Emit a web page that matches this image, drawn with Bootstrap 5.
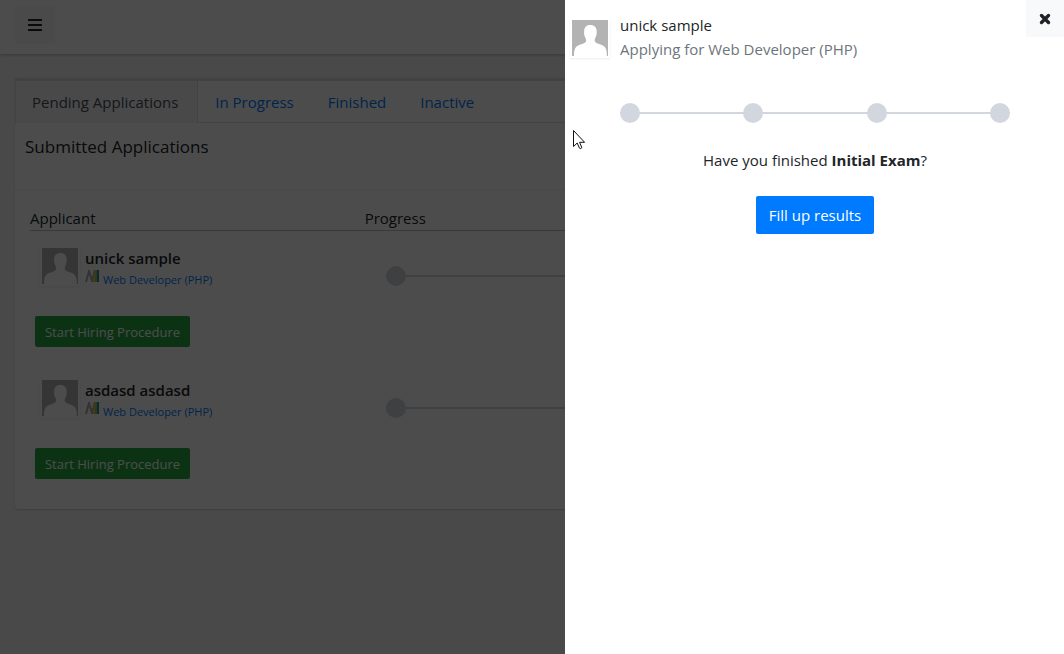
<!DOCTYPE html>
<html lang="en">
<head>
<meta charset="utf-8">
<meta name="viewport" content="width=device-width, initial-scale=1">
<title>Applications</title>
<link href="https://cdn.jsdelivr.net/npm/bootstrap@5.3.0/dist/css/bootstrap.min.css" rel="stylesheet">
<style>
  body { font-family: "Open Sans", "Noto Sans", sans-serif; font-size: 15px; line-height: 24px; color: #212529; background: #f4f6f9; overflow: hidden; }
  a { color: #007bff; text-decoration: none; }
  .topbar { background: #fff; height: 54px; padding: 0 15px 4px; box-shadow: 0 1px 3px rgba(0,0,0,.25); }
  .btn { font-size: 15px; line-height: 24px; border-radius: 2px; }
  .btn-menu { background: #f8f9fa; width: 40px; height: 38px; }
  .content-area { padding: 24px 15px; }
  .panel-card { border: 0; border-radius: 3px; box-shadow: 0 0 1px rgba(0,0,0,.13), 0 1px 2px rgba(0,0,0,.15); }
  .tab-strip { border-top: 3px solid #d9dce2; border-bottom: 1px solid #dee2e6; }
  .tab-strip .nav-link { color: #007bff; padding: 9px 17px 8px; border: 0; border-radius: 0; font-size: 15px; line-height: 24px; }
  .tab-strip .nav-item:first-child .nav-link { border-right: 1px solid #dee2e6; border-left: 1px solid #dee2e6; padding: 9px 19px 8px 16px; margin-bottom: -1px; height: 42px; }
  .tab-strip .nav-link.active { color: #495057; background: #f4f6f9; }
  .section-head { padding: 12px 10px 30px; border-bottom: 1px solid #f2f2f2; }
  .section-head h1 { font-size: 17px; line-height: 24px; font-weight: 400; margin: 0; }
  .list-wrap { padding: 16px 15px 14px; }
  .applicants { table-layout: fixed; width: 100%; }
  .applicants th { font-weight: 400; width: 33.33%; padding: 0; border-bottom: 1px solid #bcbfc3; }
  .applicants th:last-child { width: 66.67%; }
  .applicants td { height: 132px; vertical-align: top; padding: 15px 5px 0; }
  .applicants td:last-child { padding: 35px 21px 0; }
  .applicants .avatar { margin-left: 5px; }
  .avatar { width: 40px; height: 40px; padding: 2px; background: #fff; box-shadow: 0 1px 2px rgba(0,0,0,.08); flex: none; }
  .person { gap: 5px; }
  .person-name { font-weight: 600; line-height: 24px; }
  .position-line { font-size: 11px; line-height: 20px; gap: 3px; }
  .btn-hire { background: #28a745; color: #fff; font-size: 13px; line-height: 21px; padding: 6px 8px 4px; margin-top: 26px; width: 155px; white-space: nowrap; }
  .steps { list-style: none; margin: 0; padding: 0; display: flex; justify-content: space-between; background: linear-gradient(#d2d6de, #d2d6de) center / 100% 2px no-repeat; }
  .steps li { width: 20px; height: 20px; border-radius: 50%; background: #d2d6de; }
  .offcanvas-backdrop.show { opacity: .7; }
  .offcanvas.detail { --bs-offcanvas-width: 499px; --bs-offcanvas-border-width: 0; max-width: 100%; background: #fff; color: #212529; }
  .detail-head { padding: 13px 5px 0; gap: 10px; }
  .detail-head .avatar { margin-top: 5px; }
  .muted-text { color: #6c757d; }
  .detail-body { padding: 42px 54px 0 55px; }
  .question { margin: 25px 0 24px; }
  .btn-shut { background: #f8f9fa; width: 38px; height: 37px; border-radius: 0; position: absolute; top: 0; right: 0; }
  .btn-fill { background: #007bff; color: #fff; padding: 7px 12px; width: 118px; }
  .pointer { position: fixed; left: 573px; top: 130px; z-index: 1100; pointer-events: none; }
</style>
</head>
<body>
<svg class="d-none" aria-hidden="true">
  <symbol id="person" viewBox="0 0 36 36">
    <path fill="#b3b3b3" d="M0 0h36v36H0z"/>
    <path fill="#fff" d="M2 36c0-6 1-9 4-10.500 3-1.300 7-2 8-4 .5-1.500-.3-3-1.200-5C12 15 12 13 12.200 10.500 12.500 7 14.500 5 18.500 5s6 2.500 6.200 6c0 2 0 4-.8 5.500-1 2-1.500 3.500-1 5 1 2 5 2.500 8 4 3 1.500 4 4.500 4 10.500z"/>
  </symbol>
  <symbol id="brand" viewBox="0 0 15 12">
    <path fill="none" stroke="#aaa" stroke-width="2" d="M1 12 4 1l3 10 3-11"/>
    <path fill="#a2c73b" d="M10 0h2v12H9z"/>
    <path fill="#f5c33b" d="M10 0h1L9 12H8z"/>
    <path fill="#248bb0" d="M12 0h2v12h-2z"/>
  </symbol>
</svg>

<nav class="topbar d-flex align-items-center">
  <button type="button" class="btn btn-menu p-0 border-0 d-flex align-items-center justify-content-center" aria-label="Menu">
    <svg width="14" height="12" viewBox="0 0 14 12" fill="#1f2327"><rect width="14" height="2" rx=".5"/><rect y="5" width="14" height="2" rx=".5"/><rect y="10" width="14" height="2" rx=".5"/></svg>
  </button>
</nav>

<main class="content-area">
  <div class="card panel-card">
    <ul class="nav tab-strip">
      <li class="nav-item"><a class="nav-link active" href="#pending">Pending Applications</a></li>
      <li class="nav-item"><a class="nav-link" href="#progress">In Progress</a></li>
      <li class="nav-item"><a class="nav-link" href="#finished">Finished</a></li>
      <li class="nav-item"><a class="nav-link" href="#inactive">Inactive</a></li>
    </ul>
    <div class="section-head"><h1>Submitted Applications</h1></div>
    <div class="list-wrap">
      <table class="applicants">
        <thead><tr><th scope="col">Applicant</th><th scope="col">Progress</th></tr></thead>
        <tbody>
          <tr>
            <td>
              <div class="person d-flex">
                <div class="avatar"><svg class="d-block" width="36" height="36"><use href="#person"/></svg></div>
                <div class="text-nowrap">
                  <div class="person-name">unick sample</div>
                  <div class="position-line d-flex"><svg width="15" height="12"><use href="#brand"/></svg><a href="#job">Web Developer (PHP)</a></div>
                </div>
              </div>
              <button type="button" class="btn btn-hire border-0">Start Hiring Procedure</button>
            </td>
            <td><ol class="steps"><li></li><li></li><li></li><li></li></ol></td>
          </tr>
          <tr>
            <td>
              <div class="person d-flex">
                <div class="avatar"><svg class="d-block" width="36" height="36"><use href="#person"/></svg></div>
                <div class="text-nowrap">
                  <div class="person-name">asdasd asdasd</div>
                  <div class="position-line d-flex"><svg width="15" height="12"><use href="#brand"/></svg><a href="#job">Web Developer (PHP)</a></div>
                </div>
              </div>
              <button type="button" class="btn btn-hire border-0">Start Hiring Procedure</button>
            </td>
            <td><ol class="steps"><li></li><li></li><li></li><li></li></ol></td>
          </tr>
        </tbody>
      </table>
    </div>
  </div>
</main>

<div class="offcanvas-backdrop show"></div>
<aside class="offcanvas offcanvas-end show detail" data-bs-backdrop="false" tabindex="-1" aria-label="Application details">
  <button type="button" class="btn btn-shut border-0 p-0 d-flex align-items-center justify-content-center" aria-label="Close">
    <svg width="12" height="12" viewBox="0 0 12 12"><path d="M2.500 2.500l7 7m0-7l-7 7" stroke="#1f2327" stroke-width="3.400" stroke-linecap="round"/></svg>
  </button>
  <div class="detail-head d-flex">
    <div class="avatar"><svg class="d-block" width="36" height="36"><use href="#person"/></svg></div>
    <div>
      <div>unick sample</div>
      <div class="muted-text">Applying for Web Developer (PHP)</div>
    </div>
  </div>
  <div class="detail-body">
    <ol class="steps"><li></li><li></li><li></li><li></li></ol>
    <div class="text-center">
      <p class="question">Have you finished <strong>Initial Exam</strong>?</p>
      <button type="button" class="btn btn-fill border-0">Fill up results</button>
    </div>
  </div>
</aside>
<svg class="pointer" width="13" height="20" viewBox="0 0 13 20" aria-hidden="true"><path d="M.5.500v16l3.700-3.500 2.300 5.200c.8.900 2.400.3 2.200-.9L6.600 12.300h5z" fill="#fff" stroke="#111"/></svg>
<script src="https://cdn.jsdelivr.net/npm/bootstrap@5.3.0/dist/js/bootstrap.bundle.min.js"></script>
</body>
</html>
